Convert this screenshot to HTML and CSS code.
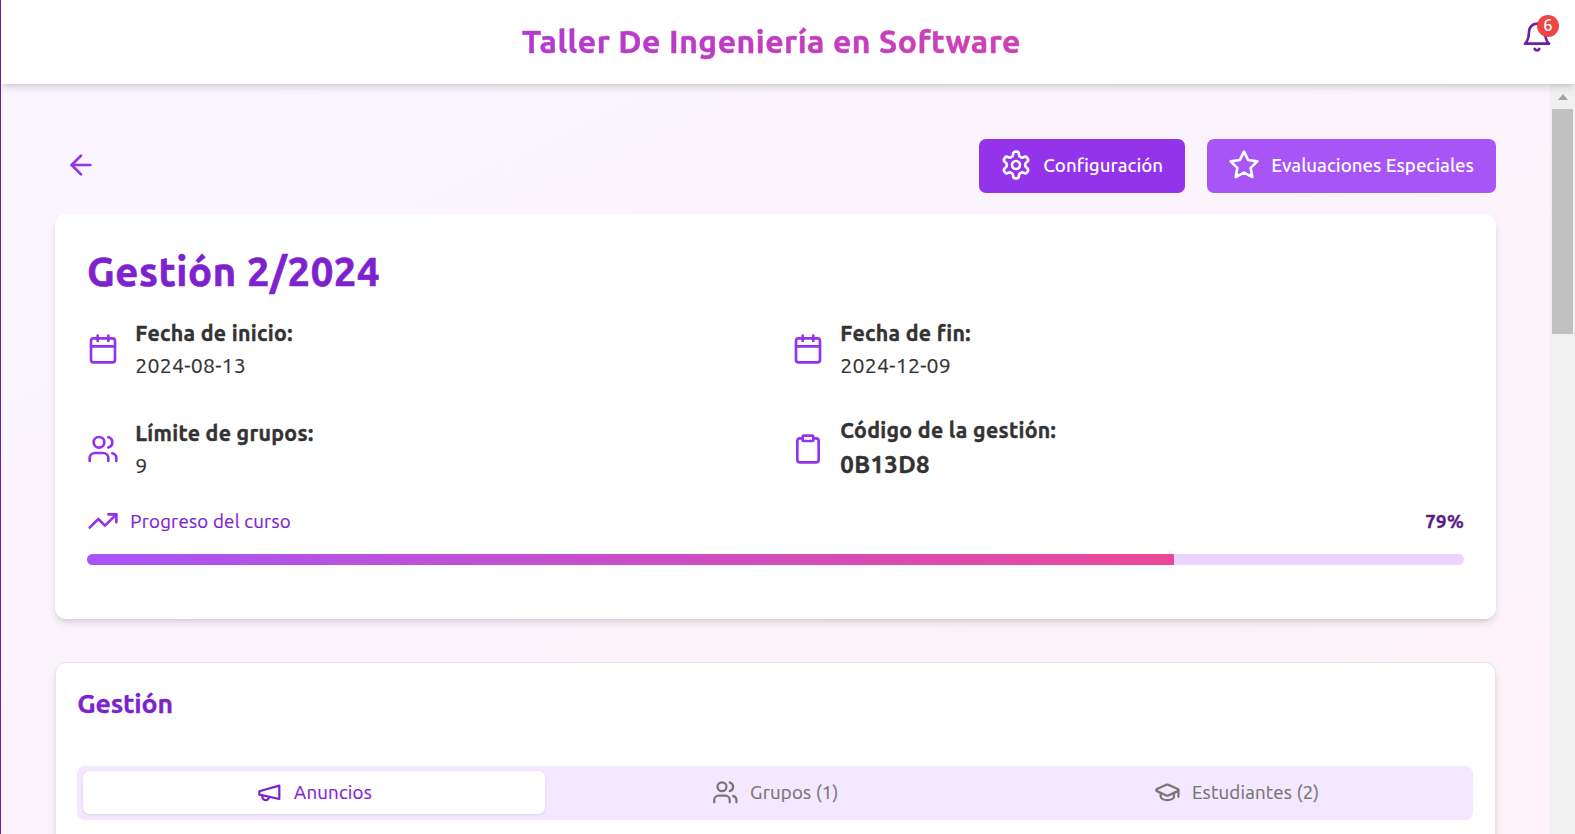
FILE: index.html
```html
<!DOCTYPE html>
<html lang="es">
<head>
<meta charset="utf-8">
<title>Taller De Ingeniería en Software</title>
<link rel="stylesheet" href="styles.css">
</head>
<body>
<div class="app">
  <header class="topbar">
    <h1 class="topbar-title"><span>Taller De Ingeniería en Software</span></h1>
    <button class="bell" aria-label="Notificaciones">
      <svg class="icon" viewBox="0 0 24 24"><path d="M6 8a6 6 0 0 1 12 0c0 7 3 9 3 9H3s3-2 3-9"/><path d="M10.3 21a1.94 1.94 0 0 0 3.4 0"/></svg>
      <span class="badge">6</span>
    </button>
  </header>
  <div class="viewport">
    <main class="content">
      <div class="actions">
        <button class="back" aria-label="Volver"><svg class="icon" viewBox="0 0 24 24"><path d="m12 19-7-7 7-7"/><path d="M19 12H5"/></svg></button>
        <div class="buttons">
          <button class="btn btn-config">
            <svg class="icon" viewBox="0 0 24 24"><path d="M12.22 2h-.44a2 2 0 0 0-2 2v.18a2 2 0 0 1-1 1.73l-.43.25a2 2 0 0 1-2 0l-.15-.08a2 2 0 0 0-2.73.73l-.22.38a2 2 0 0 0 .73 2.73l.15.1a2 2 0 0 1 1 1.72v.51a2 2 0 0 1-1 1.74l-.15.09a2 2 0 0 0-.73 2.73l.22.38a2 2 0 0 0 2.73.73l.15-.08a2 2 0 0 1 2 0l.43.25a2 2 0 0 1 1 1.73V20a2 2 0 0 0 2 2h.44a2 2 0 0 0 2-2v-.18a2 2 0 0 1 1-1.73l.43-.25a2 2 0 0 1 2 0l.15.08a2 2 0 0 0 2.73-.73l.22-.39a2 2 0 0 0-.73-2.73l-.15-.08a2 2 0 0 1-1-1.74v-.5a2 2 0 0 1 1-1.74l.15-.09a2 2 0 0 0 .73-2.73l-.22-.38a2 2 0 0 0-2.73-.73l-.15.08a2 2 0 0 1-2 0l-.43-.25a2 2 0 0 1-1-1.73V4a2 2 0 0 0-2-2z"/><circle cx="12" cy="12" r="3"/></svg>
            <span>Configuración</span>
          </button>
          <button class="btn btn-eval">
            <svg class="icon" viewBox="0 0 24 24"><path d="M12 2l3.09 6.26L22 9.27l-5 4.87 1.18 6.88L12 17.77l-6.18 3.25L7 14.14 2 9.27l6.91-1.01z"/></svg>
            <span>Evaluaciones Especiales</span>
          </button>
        </div>
      </div>

      <section class="card summary">
        <h2 class="summary-title">Gestión 2/2024</h2>
        <div class="facts">
          <div class="fact">
            <svg class="icon" viewBox="0 0 24 24"><path d="M8 2v4M16 2v4M3 10h18"/><rect x="3" y="4" width="18" height="18" rx="2"/></svg>
            <div><p class="label">Fecha de inicio:</p><p class="value">2024-08-13</p></div>
          </div>
          <div class="fact">
            <svg class="icon" viewBox="0 0 24 24"><path d="M8 2v4M16 2v4M3 10h18"/><rect x="3" y="4" width="18" height="18" rx="2"/></svg>
            <div><p class="label">Fecha de fin:</p><p class="value">2024-12-09</p></div>
          </div>
          <div class="fact">
            <svg class="icon" viewBox="0 0 24 24"><path d="M16 21v-2a4 4 0 0 0-4-4H6a4 4 0 0 0-4 4v2"/><circle cx="9" cy="7" r="4"/><path d="M22 21v-2a4 4 0 0 0-3-3.87"/><path d="M16 3.13a4 4 0 0 1 0 7.75"/></svg>
            <div><p class="label">Límite de grupos:</p><p class="value">9</p></div>
          </div>
          <div class="fact">
            <svg class="icon" viewBox="0 0 24 24"><rect x="8" y="2" width="8" height="4" rx="1"/><path d="M16 4h2a2 2 0 0 1 2 2v14a2 2 0 0 1-2 2H6a2 2 0 0 1-2-2V6a2 2 0 0 1 2-2h2"/></svg>
            <div><p class="label">Código de la gestión:</p><p class="code">0B13D8</p></div>
          </div>
        </div>
        <div class="progress-head">
          <svg class="icon" viewBox="0 0 24 24"><path d="M22 7l-8.5 8.5-5-5L2 17"/><path d="M16 7h6v6"/></svg>
          <span class="progress-name">Progreso del curso</span>
          <span class="progress-value">79%</span>
        </div>
        <div class="progress"><div class="progress-fill" style="width:78.95%"></div></div>
      </section>

      <section class="card management">
        <h3 class="management-title">Gestión</h3>
        <div class="tabs">
          <button class="tab tab-active">
            <svg class="icon" viewBox="0 0 24 24"><path d="m3 11 18-5v12L3 14v-3z"/><path d="M11.6 16.8a3 3 0 1 1-5.8-1.6"/></svg>
            <span>Anuncios</span>
          </button>
          <button class="tab">
            <svg class="icon" viewBox="0 0 24 24"><path d="M16 21v-2a4 4 0 0 0-4-4H6a4 4 0 0 0-4 4v2"/><circle cx="9" cy="7" r="4"/><path d="M22 21v-2a4 4 0 0 0-3-3.87"/><path d="M16 3.13a4 4 0 0 1 0 7.75"/></svg>
            <span>Grupos (1)</span>
          </button>
          <button class="tab">
            <svg class="icon" viewBox="0 0 24 24"><path d="M21.42 10.922a1 1 0 0 0-.019-1.838L12.83 5.18a2 2 0 0 0-1.66 0L2.6 9.08a1 1 0 0 0 0 1.832l8.57 3.908a2 2 0 0 0 1.66 0z"/><path d="M22 10v6"/><path d="M6 12.5V16a6 3 0 0 0 12 0v-3.5"/></svg>
            <span>Estudiantes (2)</span>
          </button>
        </div>
      </section>
    </main>
    <div class="scrollbar"><span class="scroll-up"></span><span class="scroll-thumb"></span></div>
  </div>
</div>
</body>
</html>
```

FILE: styles.css
```css
* { box-sizing: border-box; margin: 0; padding: 0; }
html, body { height: 100%; overflow: hidden; }
body { font-family: Ubuntu, "Noto Sans", sans-serif; color: #333; background: #fff; }
button { font: inherit; color: inherit; border: 0; background: none; }
.icon { display: block; flex: none; width: 32px; height: 32px; fill: none; stroke: currentColor; stroke-width: 2; stroke-linecap: round; stroke-linejoin: round; }

.app { display: flex; flex-direction: column; height: 834px; border-left: 1px solid #6b21a8; }

.topbar { position: relative; z-index: 2; display: flex; align-items: center; flex: none; height: 84px; padding-right: 22px; background: #fff; box-shadow: 0 5px 8px -1px rgba(0,0,0,.1), 0 3px 5px -2px rgba(0,0,0,.1); }
.topbar-title { flex: 1; padding: 0 0 2px 21px; font-size: 32px; line-height: 43px; font-weight: 700; letter-spacing: .47px; text-align: center; white-space: nowrap; color: transparent; background: linear-gradient(90deg, #9333ea, #ec4899); -webkit-background-clip: text; background-clip: text; -webkit-text-stroke: .5px transparent; }
.bell { position: relative; margin-bottom: 10px; color: #6b21a8; }
.badge { position: absolute; top: -6px; right: -6px; width: 22px; height: 22px; border-radius: 50%; background: #ef4444; color: #fff; font-family: "Noto Sans", sans-serif; font-size: 15.5px; line-height: 21px; font-weight: 500; text-align: center; }

.viewport { display: flex; flex: 1; min-height: 0; }
.content { flex: 1; padding: 55px 54px 0; overflow: hidden; background: linear-gradient(to bottom right, #faf5ff, #fdf2f8); }

.actions { display: flex; align-items: center; justify-content: space-between; height: 54px; margin-bottom: 21px; padding-left: 10px; }
.back { margin-bottom: 2px; color: #9333ea; }
.buttons { display: flex; gap: 22px; }
.btn { display: flex; align-items: center; gap: 11px; height: 54px; padding: 0 0 1px 21.3px; border-radius: 7px; color: #fff; font-size: 18.67px; font-weight: 500; white-space: nowrap; }
.btn .icon { margin-bottom: 1px; }
.btn-config { width: 206px; background: #9333ea; }
.btn-eval { width: 289px; background: #a855f7; }

.card { border-radius: 11px; background: #fff; box-shadow: 0 5px 8px -1px rgba(0,0,0,.1), 0 3px 5px -2px rgba(0,0,0,.1); }
.summary { height: 405px; padding: 34px 32px 0; }
.summary-title { margin-bottom: 21px; color: #7e22ce; font-size: 40px; line-height: 48px; font-weight: 700; letter-spacing: .62px; -webkit-text-stroke: .7px #7e22ce; }
.facts { display: grid; grid-template-columns: 1fr 1fr; gap: 33px; }
.fact { display: flex; align-items: center; gap: 16.3px; }
.fact .icon { color: #9333ea; }
.label, .value { font-size: 21.33px; line-height: 32px; }
.label { font-weight: 700; letter-spacing: .3px; -webkit-text-stroke: .4px #333; }
.value { letter-spacing: .22px; -webkit-text-stroke: .2px #333; }
.code { font-size: 24px; line-height: 37px; font-weight: 700; letter-spacing: .35px; -webkit-text-stroke: .4px #333; }
.progress-head { display: flex; align-items: center; gap: 11.3px; height: 32px; margin: 22px 0 17px; font-size: 18.67px; }
.progress-head .icon { color: #9333ea; }
.progress-name { flex: 1; color: #7e22ce; letter-spacing: .24px; -webkit-text-stroke: .2px #7e22ce; }
.progress-value { color: #581c87; font-weight: 700; letter-spacing: .3px; -webkit-text-stroke: .3px #581c87; }
.progress { height: 11px; border-radius: 6px; overflow: hidden; background: #e9d5ff; }
.progress-fill { height: 100%; background: linear-gradient(90deg, #a855f7, #ec4899); }

.management { height: 300px; margin-top: 43px; padding: 22px 21.3px 0; border: 1px solid #e5e5e5; }
.management-title { margin-bottom: 44px; color: #7e22ce; font-size: 26.67px; line-height: 37px; font-weight: 700; letter-spacing: -.2px; -webkit-text-stroke: .3px #7e22ce; }
.tabs { display: grid; grid-template-columns: repeat(3, 1fr); width: 1396px; height: 54px; padding: 5px 6px 6px; border-radius: 8px; background: #f3e8ff; }
.tab { display: flex; align-items: center; justify-content: center; gap: 11.5px; border-radius: 7px; color: #757575; font-size: 18.67px; letter-spacing: .2px; white-space: nowrap; -webkit-text-stroke: .2px currentColor; }
.tab .icon { width: 26.67px; height: 26.67px; }
.tab-active { color: #7e22ce; background: #fff; box-shadow: 0 1px 3px rgba(0,0,0,.1); }

.scrollbar { flex: none; display: flex; flex-direction: column; align-items: center; width: 25px; padding-top: 10px; background: #f0f0f0; }
.scroll-up { width: 0; height: 0; border: 5.5px solid transparent; border-top: 0; border-bottom: 6px solid #a3a3a3; }
.scroll-thumb { width: 21px; height: 225px; margin-top: 9px; background: #c1c1c1; }
```
